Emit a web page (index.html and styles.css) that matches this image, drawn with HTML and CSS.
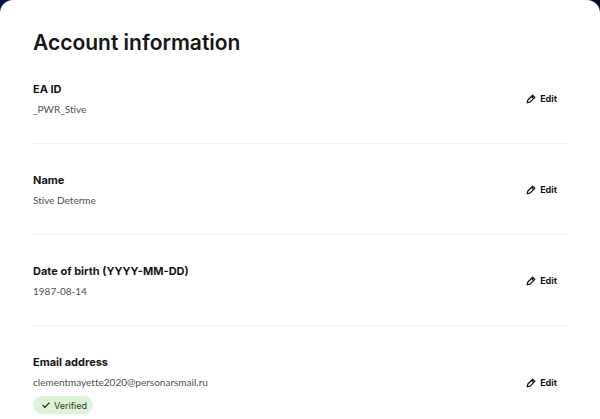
FILE: index.html
```html
<!DOCTYPE html>
<html lang="en">
<head>
    <meta charset="UTF-8">
    <meta name="viewport" content="width=device-width, initial-scale=1.0">
    <title>Account information</title>
    <link rel="stylesheet" href="styles.css">
</head>
<body>
<!-- pencil shared by all the edit buttons -->
<svg class="sprite" aria-hidden="true">
    <symbol id="pencil" viewBox="0 0 16 16">
        <path d="M2 14l1-4.5 7.6-7.6 3.5 3.5-7.6 7.6zM8.6 3.9l3.5 3.5" fill="none" stroke="currentColor" stroke-width="2" stroke-linejoin="round"/>
    </symbol>
</svg>

<main class="card">
    <h1 class="title">Account information</h1>

    <section class="row">
        <div class="info">
            <h2 class="label">EA ID</h2>
            <p class="value">_PWR_Stive</p>
        </div>
        <button type="button" class="edit"><svg class="icon"><use href="#pencil"/></svg>Edit</button>
    </section>

    <section class="row">
        <div class="info">
            <h2 class="label">Name</h2>
            <p class="value">Stive Determe</p>
        </div>
        <button type="button" class="edit"><svg class="icon"><use href="#pencil"/></svg>Edit</button>
    </section>

    <section class="row">
        <div class="info">
            <h2 class="label">Date of birth (YYYY-MM-DD)</h2>
            <p class="value">1987-08-14</p>
        </div>
        <button type="button" class="edit"><svg class="icon"><use href="#pencil"/></svg>Edit</button>
    </section>

    <section class="row last">
        <div class="info">
            <h2 class="label">Email address</h2>
            <p class="value">clementmayette2020@personarsmail.ru</p>
            <span class="badge"><svg class="check" viewBox="0 0 8 8"><path d="M0.6 4.2l2.2 2.2 4.6-4.8" fill="none" stroke="currentColor" stroke-width="1.2"/></svg>Verified</span>
        </div>
        <button type="button" class="edit"><svg class="icon"><use href="#pencil"/></svg>Edit</button>
    </section>
</main>
</body>
</html>
```
FILE: styles.css
```css
* {
    box-sizing: border-box;
}

body {
    margin: 0;
    background: linear-gradient(to right, #00104a, #000a2e);
    font-family: Inter, "Liberation Sans", sans-serif;
    color: #161616;
}

.sprite {
    display: none;
}

.card {
    min-height: 100vh;
    padding: 29px 34px 5px 33px;
    background: #fff;
    border-radius: 13px 13px 0 0;
}

.title {
    margin: 0 0 22px;
    font-size: 21px;
    line-height: 28px;
    font-weight: 600;
}

.row {
    display: flex;
    align-items: center;
    justify-content: space-between;
    padding-bottom: 24px;
    margin-bottom: 26px;
    border-bottom: 1px solid #f1f1f1;
}

.last {
    padding-bottom: 0;
    margin-bottom: 0;
    border-bottom: 0;
}

.label {
    margin: 0;
    font-size: 11px;
    line-height: 20px;
    font-weight: 700;
}

.value {
    margin: 0;
    font-family: Lato, "Liberation Sans", sans-serif;
    font-size: 10px;
    font-variant-ligatures: none;
    line-height: 20px;
    color: #505050;
}

.edit {
    display: flex;
    align-items: center;
    gap: 4px;
    padding: 4px 9px 5px;
    border: 0;
    background: none;
    font-family: inherit;
    font-size: 9px;
    line-height: 12px;
    font-weight: 700;
    color: inherit;
    cursor: pointer;
}

.icon {
    width: 10px;
    height: 10px;
}

.badge {
    display: flex;
    align-items: center;
    gap: 4px;
    width: fit-content;
    height: 18px;
    margin-top: 4px;
    padding: 0 6px 0 9px;
    border-radius: 9px;
    background: #ddf3d5;
    font-size: 9px;
    color: #333;
}

.check {
    width: 8px;
    height: 8px;
    color: #161616;
}
```
